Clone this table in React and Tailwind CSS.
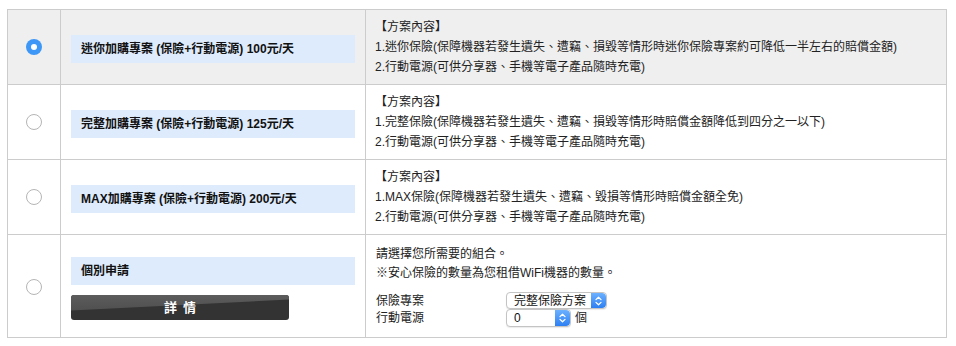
import React from "react";

const plans = [
  {
    title: "迷你加購專案 (保險+行動電源) 100元/天",
    lines: [
      "【方案內容】",
      "1.迷你保險(保障機器若發生遺失、遭竊、損毀等情形時迷你保險專案約可降低一半左右的賠償金額)",
      "2.行動電源(可供分享器、手機等電子產品隨時充電)",
    ],
    selected: true,
  },
  {
    title: "完整加購專案 (保險+行動電源) 125元/天",
    lines: [
      "【方案內容】",
      "1.完整保險(保障機器若發生遺失、遭竊、損毀等情形時賠償金額降低到四分之一以下)",
      "2.行動電源(可供分享器、手機等電子產品隨時充電)",
    ],
  },
  {
    title: "MAX加購專案 (保險+行動電源) 200元/天",
    lines: [
      "【方案內容】",
      "1.MAX保險(保障機器若發生遺失、遭竊、毀損等情形時賠償金額全免)",
      "2.行動電源(可供分享器、手機等電子產品隨時充電)",
    ],
  },
];

function Radio({ checked }) {
  if (checked) {
    return (
      <span className="flex h-[16px] w-[16px] items-center justify-center rounded-full bg-[#3d97f7]">
        <span className="h-[6px] w-[6px] rounded-full bg-white" />
      </span>
    );
  }
  return (
    <span className="block h-[16px] w-[16px] rounded-full border border-[#b5b5b5] bg-white" />
  );
}

function Stepper() {
  return (
    <span className="flex h-full w-[15px] items-center justify-center rounded-r-[4px] bg-gradient-to-b from-[#6cb1ff] to-[#2c7ff2]">
      <svg width="7" height="10" viewBox="0 0 7 10" fill="none" stroke="white" strokeWidth="1.3" strokeLinecap="round" strokeLinejoin="round">
        <path d="M1 3.6 L3.5 1.2 L6 3.6" />
        <path d="M1 6.4 L3.5 8.8 L6 6.4" />
      </svg>
    </span>
  );
}

function MacSelect({ value, width, height }) {
  return (
    <span
      className={`flex items-stretch overflow-hidden rounded-[4px] border border-[#c4c4c4] bg-white shadow-[0_1px_1px_rgba(0,0,0,0.08)] ${width} ${height}`}
    >
      <span className="flex flex-1 items-center pl-[7px] text-[12px] leading-none text-[#111]">{value}</span>
      <Stepper />
    </span>
  );
}

function Label({ children }) {
  return (
    <div className="flex h-[28px] w-[284px] items-center bg-[#deebfc] pl-[10px] text-[12px] font-bold text-[#111]">
      {children}
    </div>
  );
}

export default function App() {
  return (
    <div className="h-[346px] w-[956px] bg-white font-['Liberation_Sans','Noto_Sans_CJK_TC',sans-serif]">
      <div className="pl-[7px] pt-[9px]">
        <div className="grid w-[940px] grid-cols-[53px_305px_581px] border-l border-t border-[#cccccc]">
          {plans.map((p, i) => {
            const bg = p.selected ? "bg-[#efefef]" : "bg-white";
            return (
              <React.Fragment key={i}>
                <div className={`flex h-[75px] items-center justify-center border-b border-r border-[#cccccc] ${bg}`}>
                  <Radio checked={p.selected} />
                </div>
                <div className={`flex h-[75px] items-center border-b border-r border-[#cccccc] pl-[10px] pt-[4px] ${bg}`}>
                  <Label>{p.title}</Label>
                </div>
                <div className={`flex h-[75px] flex-col justify-center border-b border-r border-[#cccccc] pl-[9px] text-[12px] leading-[20px] text-[#222] ${bg}`}>
                  {p.lines.map((l, j) => (
                    <div key={j}>{l}</div>
                  ))}
                </div>
              </React.Fragment>
            );
          })}

          {/* custom combination row */}
          <div className="flex h-[103px] items-center justify-center border-b border-r border-[#cccccc] pt-[2px]">
            <Radio />
          </div>
          <div className="flex h-[103px] flex-col border-b border-r border-[#cccccc] pl-[10px] pt-[22px]">
            <Label>個別申請</Label>
            <button className="relative mt-[10px] flex h-[25px] w-[218px] items-center justify-center overflow-hidden rounded-[3px] bg-[#333333] text-[13px] font-bold tracking-[6px] text-white">
              <span className="absolute inset-0 bg-gradient-to-b from-[#5c5c5c] to-[#484848] [clip-path:polygon(0_0,100%_0,100%_18%,0_62%)]" />
              <span className="relative pl-[6px]">詳情</span>
            </button>
          </div>
          <div className="h-[103px] border-b border-r border-[#cccccc] pl-[10px] pt-[10px] text-[12px] text-[#222]">
            <div className="leading-[19px]">請選擇您所需要的組合。</div>
            <div className="leading-[19px]">※安心保險的數量為您租借WiFi機器的數量。</div>
            <div className="mt-[9px] flex h-[17px] items-center">
              <span className="w-[130px] leading-none">保險專案</span>
              <MacSelect value="完整保險方案" width="w-[101px]" height="h-[17px]" />
            </div>
            <div className="flex h-[18px] items-center">
              <span className="w-[130px] leading-none">行動電源</span>
              <MacSelect value="0" width="w-[65px]" height="h-[18px]" />
              <span className="ml-[4px] leading-none">個</span>
            </div>
          </div>
        </div>
      </div>
    </div>
  );
}
